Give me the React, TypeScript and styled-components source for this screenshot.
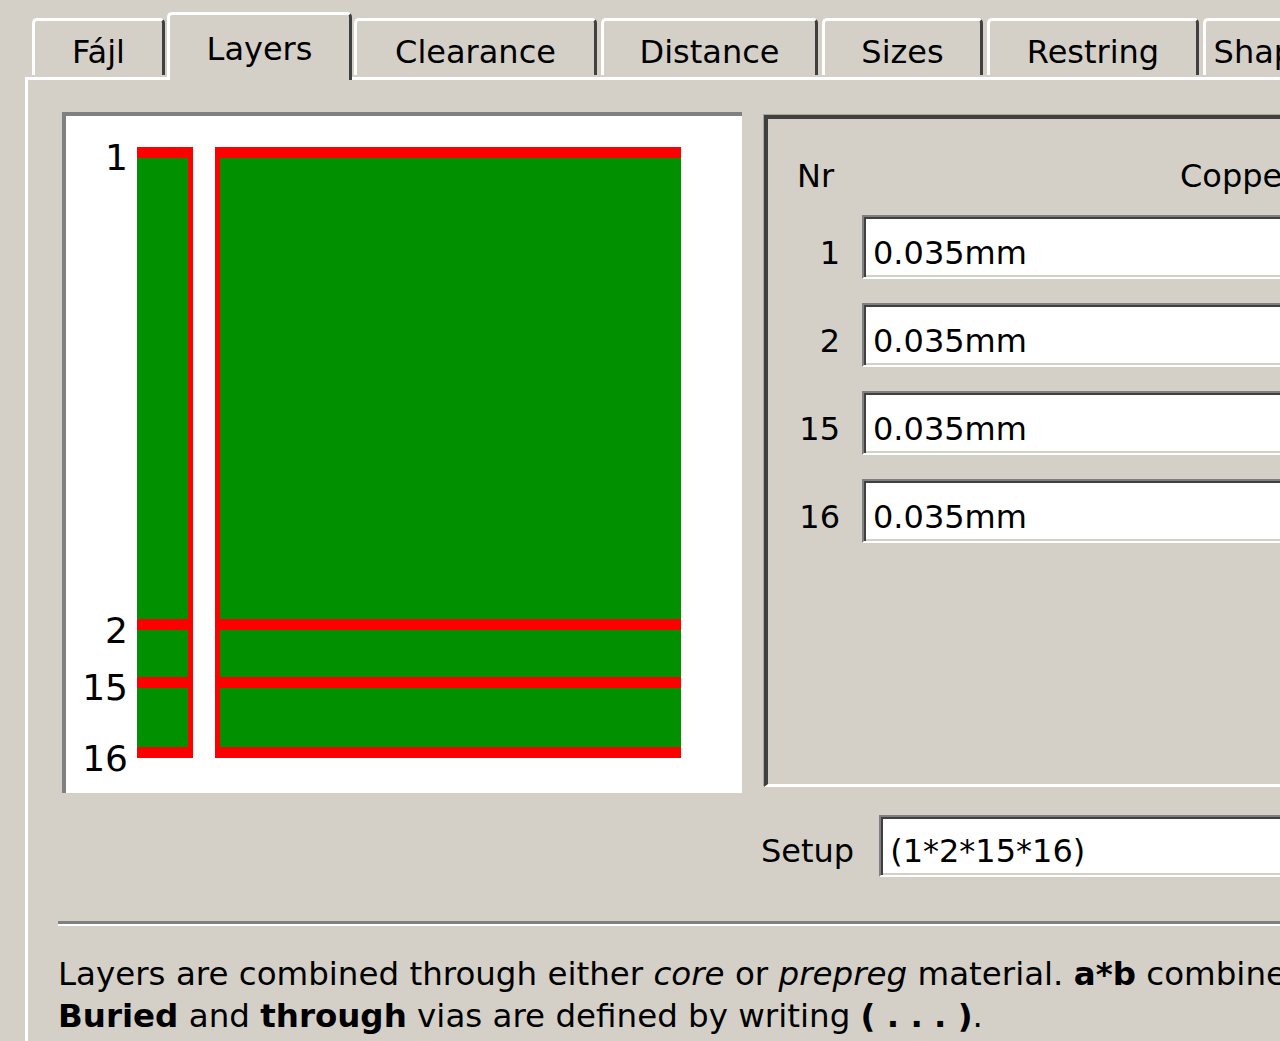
import React from "react";
import styled, { createGlobalStyle, css } from "styled-components";

const GlobalStyle = createGlobalStyle`
  html, body {
    margin: 0;
    padding: 0;
    background: #d4d0c8;
  }
  body {
    font-family: "DejaVu Sans", Verdana, sans-serif;
    color: #000;
  }
`;

const Window = styled.div`
  width: 1280px;
  height: 1041px;
  overflow: hidden;
  background: #d4d0c8;
`;

/* tabs */

const TabStrip = styled.div`
  display: flex;
  align-items: flex-end;
  gap: 4px;
  height: 77px;
  padding-left: 32px;
  box-sizing: border-box;
  white-space: nowrap;
`;

const Tab = styled.div<{ $width: number; $active?: boolean }>`
  flex: none;
  box-sizing: border-box;
  width: ${({ $width }) => $width}px;
  height: 57px;
  margin-bottom: 2px;
  padding-top: 15px;
  border-top: 3px solid #fff;
  border-left: 3px solid #fff;
  border-right: 3px solid #404040;
  border-radius: 5px 5px 0 0;
  background: #d4d0c8;
  font-size: 32px;
  line-height: 32px;
  text-align: center;
  overflow: hidden;
  ${({ $active }) =>
    $active &&
    css`
      position: relative;
      z-index: 1;
      height: 68px;
      margin: 0 -2px -3px;
      padding-top: 18px;
    `};
`;

/* panel */

const Panel = styled.div`
  margin-left: 25px;
  height: 1000px;
  border-top: 3px solid #fff;
  border-left: 3px solid #fff;
  padding: 32px 0 0 34px;
`;

const Columns = styled.div`
  display: grid;
  grid-template-columns: 680px 900px;
  column-gap: 22px;
  row-gap: 22px;
`;

const Preview = styled.div`
  box-sizing: border-box;
  width: 680px;
  height: 681px;
  background: #fff;
  border-top: 4px solid #808080;
  border-left: 4px solid #808080;
  display: flex;
`;

const LayerGroup = styled.div`
  box-sizing: border-box;
  height: 672px;
  margin-top: 3px;
  border-top: 4px solid #404040;
  border-left: 4px solid #404040;
  border-bottom: 3px solid #fff;
  box-shadow: -1px -1px 0 #a8a5a0;
  padding: 41px 0 0 29px;
  display: grid;
  grid-template-columns: 43px 1fr;
  grid-auto-rows: min-content;
  column-gap: 22px;
  row-gap: 24px;
`;

const HeadCell = styled.div<{ $indent?: number }>`
  font-size: 32px;
  line-height: 32px;
  padding-left: ${({ $indent }) => $indent ?? 0}px;
  margin-bottom: -1px;
  white-space: nowrap;
`;

const RowLabel = styled.div`
  height: 64px;
  box-sizing: border-box;
  padding-top: 22px;
  font-size: 32px;
  line-height: 32px;
  text-align: right;
`;

const Field = styled.div<{ $height?: number; $top?: number }>`
  box-sizing: border-box;
  height: ${({ $height }) => $height ?? 64}px;
  padding: ${({ $top }) => $top ?? 20}px 0 0 9px;
  background: #fff;
  border-top: 2px solid #808080;
  border-left: 2px solid #808080;
  border-bottom: 2px solid #fff;
  border-right: 2px solid #fff;
  box-shadow: inset 2px 2px 0 #404040, inset -2px -2px 0 #d4d0c8;
  font-size: 32px;
  line-height: 32px;
  white-space: nowrap;
`;

const SetupRow = styled.div`
  grid-column: 2;
  display: flex;
  align-items: flex-start;
  gap: 25px;
  margin-left: -3px;
`;

const SetupLabel = styled.div`
  padding-top: 20px;
  font-size: 32px;
  line-height: 32px;
`;

const SetupField = styled(Field)`
  flex: 1;
`;

const Separator = styled.div`
  margin: 44px 0 0 -4px;
  width: 1300px;
  height: 3px;
  background: #808080;
  border-bottom: 2px solid #fff;
`;

const Help = styled.div`
  margin: 27px 0 0 -4px;
  font-size: 32.5px;
  line-height: 42px;
  white-space: nowrap;
`;

const tabs = [
  { label: "Fájl", width: 133 },
  { label: "Layers", width: 185, active: true },
  { label: "Clearance", width: 243 },
  { label: "Distance", width: 217 },
  { label: "Sizes", width: 161 },
  { label: "Restring", width: 212 },
  { label: "Shapes", width: 138 },
];

const layers = ["1", "2", "15", "16"];

// y ranges of green core/prepreg between the red copper lines
const greenBands = [
  [158, 619],
  [630, 677],
  [688, 747],
];

const StackDrawing = () => (
  <svg width={676} height={677} viewBox="66 116 676 677">
    <rect x={137} y={147} width={56} height={611} fill="#ff0000" />
    <rect x={215} y={147} width={466} height={611} fill="#ff0000" />
    {greenBands.map(([a, b]) => (
      <g key={a}>
        <rect x={137} y={a} width={51} height={b - a} fill="#009000" />
        <rect x={220} y={a} width={461} height={b - a} fill="#009000" />
      </g>
    ))}
    <g fontFamily="DejaVu Sans, Verdana, sans-serif" fontSize={36} textAnchor="end" fill="#000">
      <text x={128} y={170}>1</text>
      <text x={128} y={643}>2</text>
      <text x={128} y={700}>15</text>
      <text x={128} y={771}>16</text>
    </g>
  </svg>
);

export default function App() {
  return (
    <Window>
      <GlobalStyle />
      <TabStrip>
        {tabs.map((t) => (
          <Tab key={t.label} $width={t.width} $active={t.active}>
            {t.label}
          </Tab>
        ))}
      </TabStrip>
      <Panel>
        <Columns>
          <Preview>
            <StackDrawing />
          </Preview>
          <LayerGroup>
            <HeadCell>Nr</HeadCell>
            <HeadCell $indent={318}>Copper</HeadCell>
            {layers.map((nr) => (
              <React.Fragment key={nr}>
                <RowLabel>{nr}</RowLabel>
                <Field>0.035mm</Field>
              </React.Fragment>
            ))}
          </LayerGroup>
          <SetupRow>
            <SetupLabel>Setup</SetupLabel>
            <SetupField $height={62} $top={18}>(1*2*15*16)</SetupField>
          </SetupRow>
        </Columns>
        <Separator />
        <Help>
          Layers are combined through either <i>core</i> or <i>prepreg</i> material.{" "}
          <b>a*b</b> combines layers a and b with core material, <b>a+b</b> with prepreg.
          <br />
          <b>Buried</b> and <b>through</b> vias are defined by writing <b>( . . . )</b>.
        </Help>
      </Panel>
    </Window>
  );
}
